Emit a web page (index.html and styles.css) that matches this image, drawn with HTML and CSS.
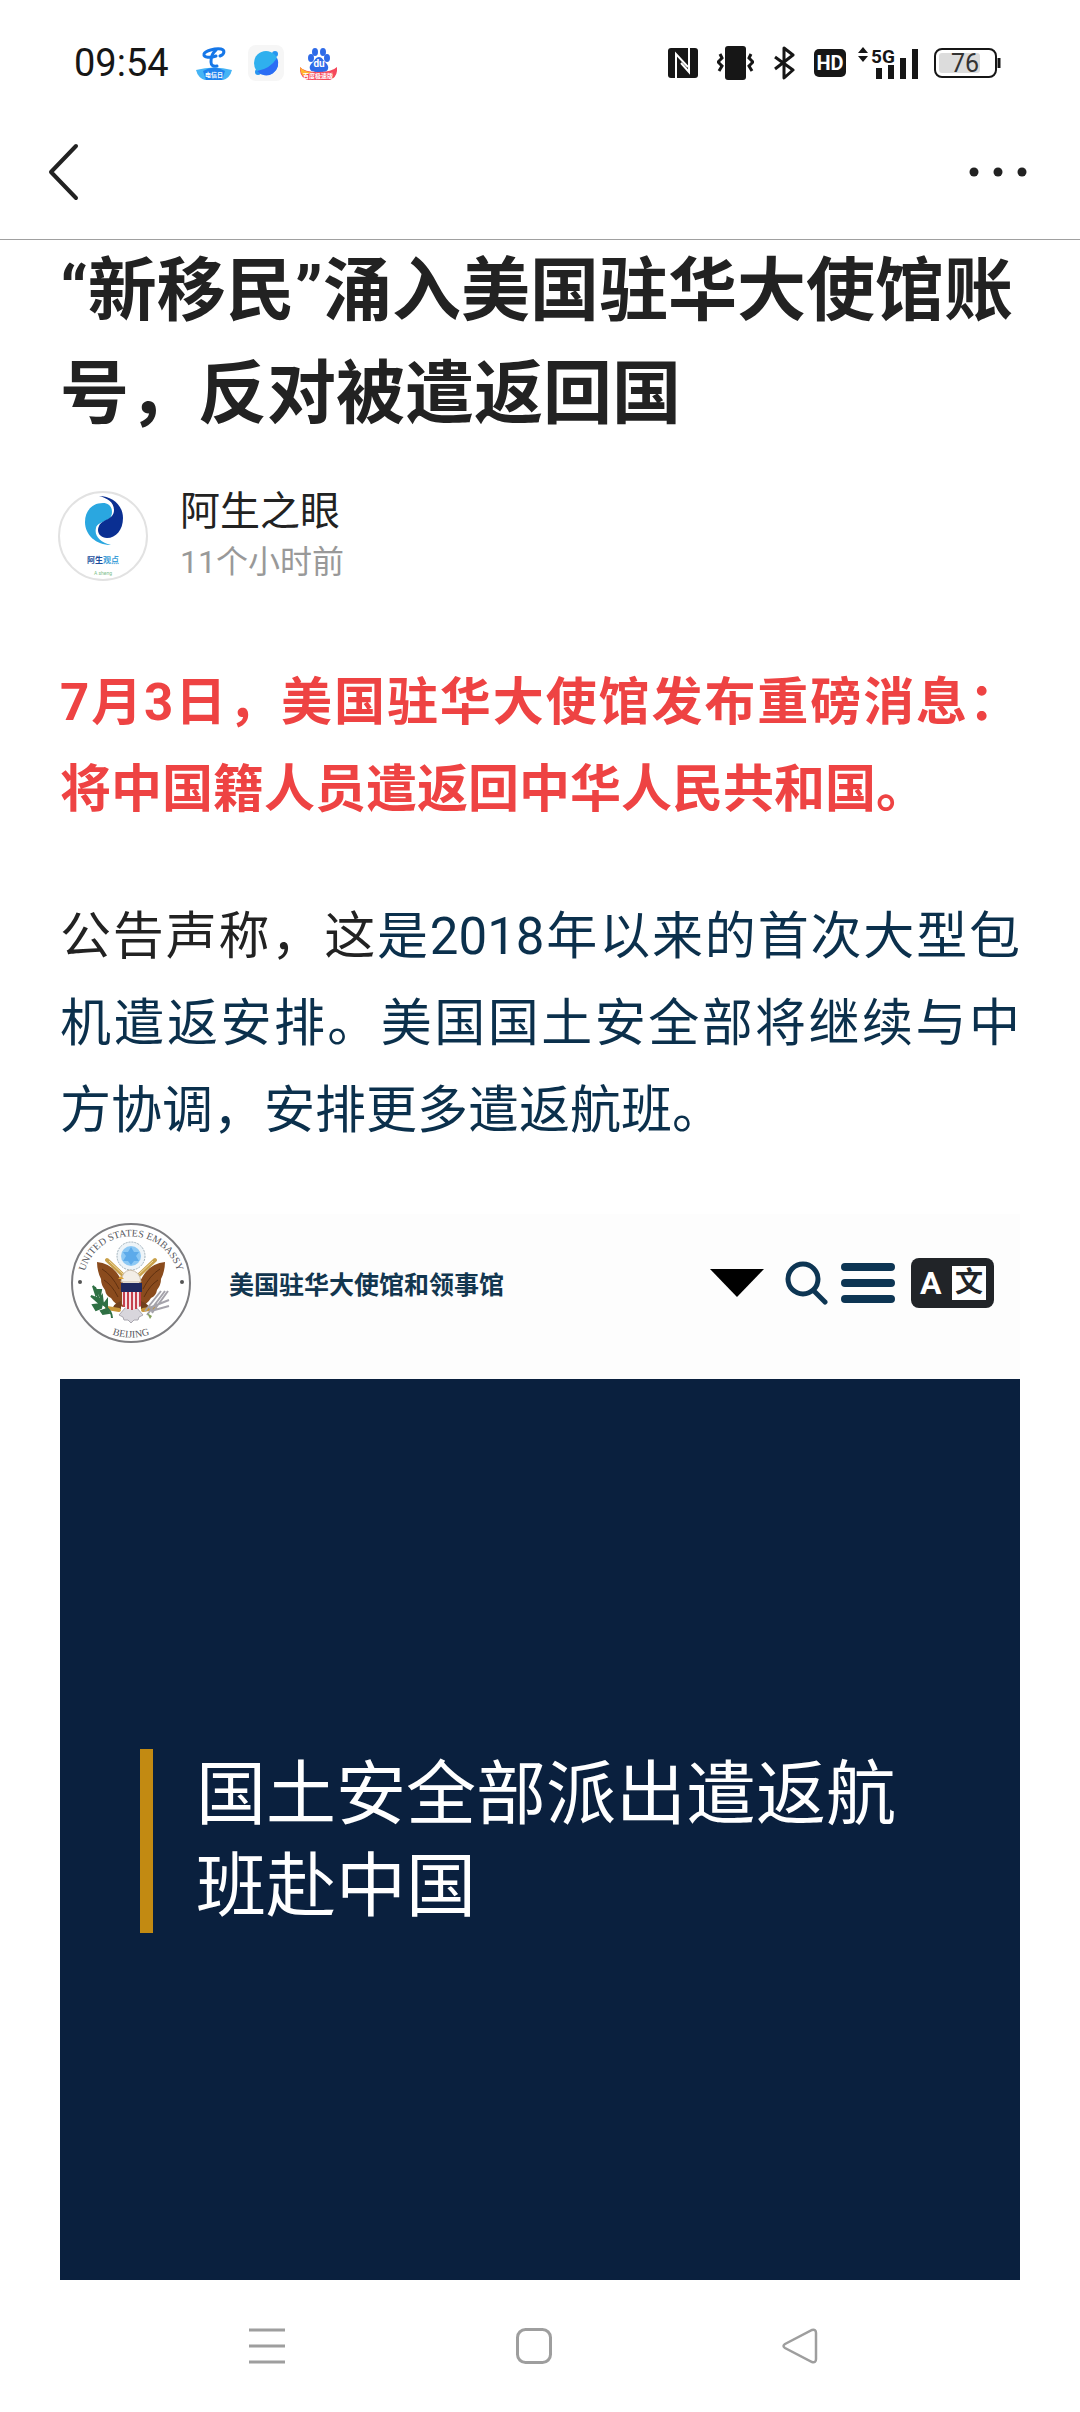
FILE: index.html
```html
<!DOCTYPE html>
<html lang="zh-CN">
<head>
  <meta charset="UTF-8" />
  <meta name="viewport" content="width=device-width, initial-scale=1" />
  <title>“新移民”涌入美国驻华大使馆账号，反对被遣返回国</title>
  <link rel="stylesheet" href="styles.css">
</head>
<body>
  <div class="status-bar">
    <span class="clock">09:54</span>
    <div class="status-apps">
      <svg width="36" height="36" viewBox="0 0 36 36">
        <g fill="none" stroke="#1677e8" stroke-width="3" stroke-linecap="round">
          <path d="M24 11C29 9 29 5 25 4C19 3 9 6 8 9c-1 4 7 4 12 2"/>
          <path d="M20 5c-4 3-5 8-5 12c0 3 2 5 6 4"/>
        </g>
        <path d="M0 25q18-5 36 0q-2 8-9 10H9q-7-2-9-10z" fill="#45b4f5"/>
        <path d="M7 26q11-7 22 0l-3 9H10z" fill="#1f83ee"/>
        <text x="18" y="32" class="tiny-label">电信日</text>
      </svg>
      <svg width="36" height="36" viewBox="0 0 36 36">
        <rect width="36" height="36" rx="8" fill="#f6f6f6"/>
        <circle cx="27" cy="9" r="3" fill="#2695f0"/>
        <circle cx="10" cy="27" r="3" fill="#2695f0"/>
        <circle cx="18" cy="18" r="12" fill="#2fb0ee"/>
        <path d="M29 13A12 12 0 0 1 9 26Q22 24 29 13z" fill="#2b6df5"/>
      </svg>
      <svg width="37" height="36" viewBox="0 0 37 36">
        <g fill="#2f6be8">
          <ellipse cx="11" cy="13" rx="3" ry="4"/>
          <ellipse cx="15" cy="7" rx="3" ry="4"/>
          <ellipse cx="23" cy="7" rx="3" ry="4"/>
          <ellipse cx="27" cy="13" rx="3" ry="4"/>
          <path d="M19 12c3 0 4 3 6 5s4 4 3 7s-4 3-9 3s-8 0-9-3s1-5 3-7s3-5 6-5z"/>
        </g>
        <path d="M0 22q4 5 18 5t19-5q1 10-7 13H8Q-1 32 0 22z" fill="#f5485c"/>
        <path d="M0 22q4 5 12 5l-9 4q-3-4-3-9z" fill="#ffb62e"/>
        <text x="19" y="22" class="du-label">du</text>
        <text x="18" y="33" class="tiny-label">百度极速版</text>
      </svg>
    </div>
    <div class="status-icons">
      <svg width="30" height="30" viewBox="0 0 30 30">
        <rect width="30" height="30" rx="3" fill="#161616"/>
        <path d="M8 30V6l12 13M21 0v24L13 15" fill="none" stroke="#fff" stroke-width="2"/>
      </svg>
      <svg class="vibrate" width="37" height="34" viewBox="0 0 37 34">
        <rect x="8" width="21" height="34" rx="3" fill="#161616"/>
        <path d="M3 8l2 4-4 4 4 4-3 5M34 8l-2 4 4 4-4 4 3 5" fill="none" stroke="#161616" stroke-width="3"/>
      </svg>
      <svg class="bluetooth" width="21" height="34" viewBox="0 0 21 34">
        <path d="M1 11l18 13-9 8V2l9 7L1 23" fill="none" stroke="#161616" stroke-width="3" stroke-linejoin="round"/>
      </svg>
      <svg class="hd" width="32" height="28" viewBox="0 0 32 28">
        <rect width="32" height="28" rx="5" fill="#161616"/>
        <text x="16" y="21" class="hd-label">HD</text>
      </svg>
      <svg class="signal" width="60" height="34" viewBox="0 0 60 34">
        <path d="M0 7l5-6 5 6zM0 10l5 6 5-6z" fill="#161616"/>
        <text x="13" y="17" class="net-label">5G</text>
        <path d="M18 22h6v11h-6zM30 19h6v14h-6zM42 12h6v21h-6zM54 3h6v30h-6z" fill="#161616"/>
      </svg>
      <svg width="67" height="32" viewBox="0 0 67 32">
        <rect x="1" y="2" width="61" height="28" rx="7" fill="#fff" stroke="#161616" stroke-width="2"/>
        <rect x="5" y="6" width="41" height="20" rx="3" fill="#dcdcdc"/>
        <path d="M65 11v10" stroke="#161616" stroke-width="3"/>
        <text x="31" y="25" class="battery-label">76</text>
      </svg>
    </div>
  </div>

  <header class="app-bar">
    <button class="icon-button" aria-label="返回">
      <svg width="32" height="60" viewBox="0 0 32 60">
        <path d="M29 4L4 30l25 26" fill="none" stroke="#222" stroke-width="4" stroke-linecap="round" stroke-linejoin="round"/>
      </svg>
    </button>
    <button class="icon-button" aria-label="更多">
      <svg width="58" height="60" viewBox="0 0 58 60" fill="#222">
        <circle cx="5" cy="30" r="4.5"/>
        <circle cx="29" cy="30" r="4.5"/>
        <circle cx="53" cy="30" r="4.5"/>
      </svg>
    </button>
  </header>

  <main class="article">
    <h1 class="title">“新移民”涌入美国驻华大使馆账号，反对被遣返回国</h1>

    <div class="author">
      <svg class="avatar" width="90" height="90" viewBox="0 0 90 90">
        <circle cx="45" cy="45" r="44" fill="#fff" stroke="#e2e2e2" stroke-width="2"/>
        <path d="M45 12C33 12 27 21 27 31C27 44 38 54 53 54C42 51 36 45 38 37C40 29 54 32 54 21C54 15 50 12 45 12z" fill="#2aa7e0"/>
        <path d="M41 5C54 5 65 14 65 27C65 39 58 47 49 47C42 47 38 41 41 35C44 28 56 29 56 19C56 11 49 7 41 5z" fill="#0a2f92"/>
        <text x="29" y="72" class="avatar-name"><tspan fill="#1c4f9c">阿生</tspan><tspan fill="#3f9fd8">观点</tspan></text>
        <text x="45" y="84" class="avatar-latin">A sheng</text>
      </svg>
      <div class="author-info">
        <span class="author-name">阿生之眼</span>
        <time class="author-time">11个小时前</time>
      </div>
    </div>

    <p class="lead">7月3日，美国驻华大使馆发布重磅消息：将中国籍人员遣返回中华人民共和国。</p>
    <p>公告声称，这<span class="quoted">是2018年以来的首次大型包机遣返安排。美国国土安全部将继续与中方协调，安排更多遣返航班。</span></p>

    <section class="embassy">
      <div class="embassy-bar">
        <svg class="seal" width="120" height="120" viewBox="0 0 120 120">
          <defs>
            <path id="arc-top" d="M15 78A48 48 0 1 1 105 78"/>
            <path id="arc-bottom" d="M22 99A54 54 0 0 0 98 99"/>
          </defs>
          <circle cx="60" cy="60" r="59" fill="#fff" stroke="#7d7d80" stroke-width="2"/>
          <text class="seal-text"><textPath href="#arc-top" startOffset="50%">UNITED STATES EMBASSY</textPath></text>
          <text class="seal-text"><textPath href="#arc-bottom" startOffset="50%">BEIJING</textPath></text>
          <circle cx="9" cy="59" r="2" fill="#555"/>
          <circle cx="111" cy="59" r="2" fill="#555"/>
          <!-- tail -->
          <path d="M55 84l-7 8 4 2 1 3 4 0 3 3 3-3 4 0 1-3 4-2-7-8z" fill="#d8d6dc" stroke="#aaa8b0"/>
          <!-- wings -->
          <path d="M26 39Q40 40 48 53L52 60V84Q44 82 40 75Q35 73 34 67Q30 62 30 56Q26 48 26 39z" fill="#8a4b1d"/>
          <path d="M94 39Q80 40 72 53L68 60V84Q76 82 80 75Q85 73 86 67Q90 62 90 56Q94 48 94 39z" fill="#8a4b1d"/>
          <path d="M31 46q10 6 17 20M33 57q8 5 14 17M89 46q-10 6-17 20M87 57q-8 5-14 17" fill="none" stroke="#5f3010"/>
          <!-- scroll -->
          <path d="M36 37L53 53M84 37L67 53" stroke="#c9a14b" stroke-width="4" stroke-linecap="round"/>
          <path d="M38 38L53 52M82 38L67 52" stroke="#f0dca0"/>
          <!-- glory -->
          <circle cx="60" cy="33" r="14" fill="#eef4f8" stroke="#9fb0ba" stroke-dasharray="2 1"/>
          <circle cx="60" cy="33" r="10" fill="#8cc8f4"/>
          <path d="M60 24l3 5 5 0-3 4 3 5-5 0-3 4-3-4-5 0 3-5-3-4 5 0z" fill="#5caaea"/>
          <!-- head -->
          <path d="M50 59q1-11 9-12q10 1 11 12z" fill="#f3eee6" stroke="#c9bba8"/>
          <path d="M50 53l-3 3 6 0z" fill="#dca43a"/>
          <!-- legs -->
          <path d="M50 78q-10 4-8 9l8-1zM70 78q10 4 8 9l-8-1z" fill="#70401c"/>
          <path d="M36 85l12 2M84 85l-12 2" stroke="#c8963a" stroke-width="4" stroke-linecap="round"/>
          <!-- shield -->
          <path d="M51 61h19v20q-2 5-9 6q-8-1-10-6z" fill="#f5e4e6"/>
          <path d="M53 68v16M57 68v18M61 68v19M65 68v18M69 68v15" stroke="#c5404e" stroke-width="2"/>
          <path d="M50 60h21v9H50z" fill="#20295f"/>
          <!-- olive branch and arrows -->
          <path d="M24 64q2 12 9 18q8 6 8 13" fill="none" stroke="#2f7044" stroke-width="2"/>
          <path d="M22 63l5 6-2 3zM20 73l8 3 0 4zM22 82l9-1-1 4-5 2zM31 73l-3 5 4 3zM36 77l-3 4 3 3zM30 88l6-2 2 4-6 1zM26 67l4 0-1 6z" fill="#2f7044" stroke="#2f7044" stroke-width="2"/>
          <path d="M76 92l18-24M81 90l16-22M74 88l16-20M78 85l20-8M80 88l18-5" stroke="#a5a3ab" stroke-width="2"/>
          <path d="M76 90l5 3-2 3z" fill="#86a05e"/>
        </svg>
        <a class="embassy-name" href="#">美国驻华大使馆和领事馆</a>
        <div class="embassy-tools">
          <button class="icon-button" aria-label="展开">
            <svg width="54" height="28" viewBox="0 0 54 28"><path d="M0 0h54L27 28z" fill="#000"/></svg>
          </button>
          <button class="icon-button search" aria-label="搜索">
            <svg width="44" height="44" viewBox="0 0 44 44" fill="none" stroke="#0d3553">
              <circle cx="18" cy="18" r="15" stroke-width="5"/>
              <path d="M29 30l11 11" stroke-width="5" stroke-linecap="round"/>
            </svg>
          </button>
          <button class="icon-button menu" aria-label="菜单">
            <svg width="54" height="42" viewBox="0 0 54 42">
              <path d="M4 5h46M4 21h46M4 37h46" stroke="#0d3553" stroke-width="8" stroke-linecap="round"/>
            </svg>
          </button>
          <button class="translate" aria-label="翻译">
            <span class="translate-from">A</span>
            <span class="translate-to">文</span>
          </button>
        </div>
      </div>
      <div class="embassy-hero">
        <h2>国土安全部派出遣返航班赴中国</h2>
      </div>
    </section>
  </main>

  <nav class="system-nav">
    <button class="icon-button" aria-label="最近任务">
      <svg width="36" height="36" viewBox="0 0 36 36"><path d="M0 2h36M0 18h36M0 34h36" stroke="#9e9e9e" stroke-width="3"/></svg>
    </button>
    <button class="icon-button" aria-label="主屏幕">
      <svg width="36" height="36" viewBox="0 0 36 36"><rect x="1.5" y="1.5" width="33" height="33" rx="8" fill="none" stroke="#9e9e9e" stroke-width="3"/></svg>
    </button>
    <button class="icon-button" aria-label="返回上一级">
      <svg width="36" height="36" viewBox="0 0 36 36"><path d="M3 16L30 2q4-1 4 3v26q0 4-4 3L3 20q-3-2 0-4z" fill="none" stroke="#9e9e9e" stroke-width="2.5"/></svg>
    </button>
  </nav>
</body>
</html>
```
FILE: styles.css
```css
* { box-sizing: border-box; }
body { margin: 0; background: #fff; color: #222; font-family: Roboto, "Noto Sans CJK SC", sans-serif; }
svg { display: block; flex: none; }
h1, h2, p { margin: 0; }
.icon-button { padding: 0; border: 0; background: none; cursor: pointer; }

/* phone status bar */
.status-bar { display: flex; align-items: center; height: 105px; padding: 20px 79px 0 74px; }
.clock { font-size: 38px; line-height: 40px; color: #161616; }
.status-apps { display: flex; gap: 16px; margin-left: 27px; }
.status-icons { display: flex; align-items: center; margin-left: auto; }
.vibrate { margin-left: 19px; }
.bluetooth { margin-left: 20px; }
.hd { margin-left: 19px; }
.signal { margin: 0 16px 0 12px; }
.tiny-label { font-size: 6px; font-weight: bold; fill: #fff; text-anchor: middle; }
.du-label { font-size: 10px; font-weight: bold; fill: #fff; text-anchor: middle; }
.hd-label { font-size: 20px; font-weight: bold; fill: #fff; text-anchor: middle; }
.net-label { font-size: 19px; font-weight: bold; fill: #161616; }
.battery-label { font-size: 25px; fill: #333; text-anchor: middle; }

.app-bar { display: flex; align-items: center; justify-content: space-between; height: 135px; padding: 0 53px 0 47px; border-bottom: 1px solid #a0a0a0; }

.article { padding: 0 60px; }
.title { font-size: 69px; line-height: 103px; font-weight: bold; }

.author { display: flex; align-items: center; gap: 32px; margin: 40px 0 73px -2px; }
.author-info { display: flex; flex-direction: column; }
.author-name { font-size: 40px; line-height: 52px; }
.author-time { font-size: 32px; line-height: 48px; color: #999; }
.avatar-name { font-size: 8px; font-weight: bold; }
.avatar-latin { font-size: 5px; fill: #7cc08a; text-anchor: middle; }

.article p { margin-bottom: 60px; font-size: 51px; line-height: 87px; text-align: justify; }
.article .lead { color: #ee4343; font-weight: bold; }
.quoted { color: #0b304c; }

/* embassy page */
.embassy-bar { display: flex; align-items: center; height: 165px; padding: 0 26px 27px 11px; background: #fdfdfd; }
.seal-text { font-family: "Liberation Serif", serif; font-size: 10px; fill: #55565c; text-anchor: middle; }
.embassy-name { margin-left: 38px; font-size: 25px; font-weight: bold; color: #12364f; text-decoration: none; }
.embassy-tools { display: flex; align-items: center; margin-left: auto; }
.search { margin-left: 21px; }
.menu { margin-left: 12px; }
.translate { display: flex; align-items: center; justify-content: space-between; width: 83px; height: 50px; margin-left: 16px; padding: 0 8px 0 9px; border: 0; border-radius: 8px; background: #212428; font-family: inherit; font-weight: bold; }
.translate-from { font-size: 32px; color: #fff; }
.translate-to { width: 34px; font-size: 28px; line-height: 34px; color: #212428; background: #fff; }
.embassy-hero { padding: 370px 80px 347px; background: #0a203e; }
.embassy-hero h2 { padding-left: 43px; border-left: 13px solid #c28a12; font-size: 70px; line-height: 92px; font-weight: normal; color: #fff; }

.system-nav { display: flex; align-items: center; justify-content: space-between; height: 132px; padding: 0 262px 0 249px; }
```
